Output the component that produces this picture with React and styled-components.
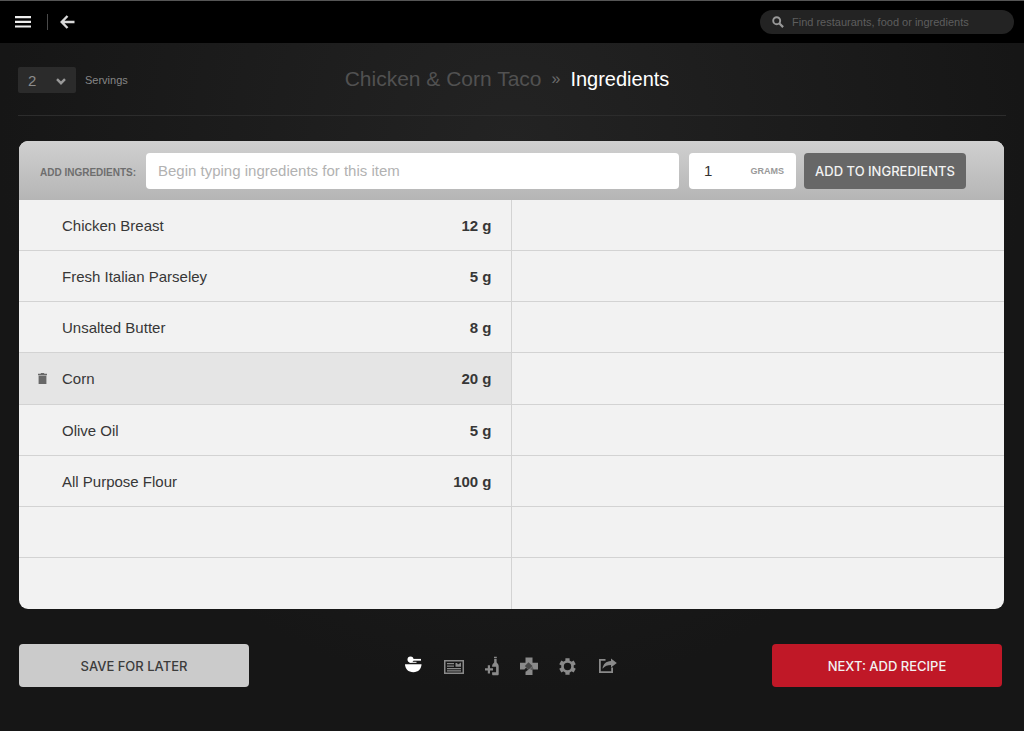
import styled, { createGlobalStyle } from "styled-components";

const GlobalStyle = createGlobalStyle`
  * {
    box-sizing: border-box;
  }

  body {
    margin: 0;
    background: #161616;
    font-family: "Liberation Sans", Arial, sans-serif;
  }

  input,
  select,
  button {
    margin: 0;
    border: 0;
    font-family: inherit;
  }
`;

const Page = styled.div`
  min-height: 100vh;
  background: radial-gradient(ellipse 50% 75% at 50% 20%, #232323, #161616);
`;

const TopBar = styled.header`
  display: flex;
  align-items: center;
  height: 43px;
  padding: 0 10px 0 15px;
  background: #000;
  border-top: 1px solid #555;
`;

const IconButton = styled.button`
  display: flex;
  padding: 0;
  background: none;
  color: ${({ $color }) => $color || "#8a8a8a"};
  cursor: pointer;
`;

const Divider = styled.span`
  width: 1px;
  height: 16px;
  margin: 0 12px 0 16px;
  background: #4a4a4a;
`;

const Search = styled.label`
  display: flex;
  align-items: center;
  gap: 8px;
  width: 254px;
  height: 24px;
  margin-left: auto;
  padding: 0 12px;
  border-radius: 12px;
  background: #232323;
  color: #999;
`;

const SearchInput = styled.input`
  flex: 1;
  min-width: 0;
  padding: 0;
  background: none;
  color: #aaa;
  font-size: 11px;
  outline: none;

  &::placeholder {
    color: #5e5e5e;
    opacity: 1;
  }
`;

const Heading = styled.div`
  display: grid;
  grid-template-columns: 110px 1fr 120px;
  align-items: center;
  height: 73px;
  margin: 0 18px;
  border-bottom: 1px solid #2c2c2c;
`;

const Servings = styled.label`
  display: flex;
  align-items: center;
  gap: 9px;
  padding-top: 2px;
  color: #868686;
  font-size: 11px;
`;

const SelectBox = styled.span`
  position: relative;
  color: #999;

  svg {
    position: absolute;
    top: 11px;
    right: 10px;
    pointer-events: none;
  }
`;

const Select = styled.select`
  display: block;
  width: 58px;
  height: 26px;
  padding: 0 10px;
  border-radius: 2px;
  background: #2b2b2b;
  color: #8c8c8c;
  font-size: 15px;
  appearance: none;
`;

const Title = styled.h1`
  display: flex;
  align-items: center;
  justify-content: center;
  gap: 10px;
  margin: 0;
  color: #fff;
  font-size: 20px;
  font-weight: 400;
  line-height: 24px;
  white-space: nowrap;
`;

const Dish = styled.a`
  color: #515151;
  font-size: 21px;
  text-decoration: none;
`;

const Crumb = styled.span`
  color: #6c6c6c;
  font-size: 16px;
`;

const Panel = styled.main`
  margin: 25px 20px 0 19px;
  border-radius: 9px;
  background: #f2f2f2;
  overflow: hidden;
`;

const AddForm = styled.form`
  display: flex;
  align-items: center;
  gap: 8px;
  height: 59px;
  padding: 0 38px 0 21px;
  background: linear-gradient(#d0d0d0, #b5b5b5);
`;

const AddLabel = styled.label`
  min-width: 98px;
  color: #6e6e6e;
  font-size: 10px;
  font-weight: 700;
  line-height: 12px;
  padding-top: 4px;
  white-space: nowrap;
`;

const NameInput = styled.input`
  flex: 1;
  min-width: 0;
  height: 36px;
  padding: 0 12px;
  border-radius: 4px;
  background: #fff;
  color: #333;
  font-size: 15px;

  &::placeholder {
    color: #b2b2b2;
    opacity: 1;
  }
`;

const Amount = styled.label`
  display: flex;
  align-items: center;
  width: 107px;
  height: 36px;
  margin-left: 2px;
  padding: 0 12px 0 15px;
  border-radius: 4px;
  background: #fff;
  color: #999;
  font-size: 9px;
  font-weight: 700;
`;

const AmountInput = styled.input`
  flex: 1;
  min-width: 0;
  padding: 0;
  color: #333;
  font-size: 15px;
`;

const Button = styled.button`
  flex: none;
  width: ${({ $wide }) => ($wide ? "230px" : "162px")};
  height: ${({ $wide }) => ($wide ? "43px" : "36px")};
  padding: 0;
  border-radius: 4px;
  background: ${({ $bg }) => $bg};
  color: ${({ $color }) => $color || "#f2f2f2"};
  font-family: Inter, sans-serif;
  font-size: 13px;
  font-weight: 500;
  cursor: pointer;
`;

const Table = styled.table`
  width: 100%;
  table-layout: fixed;
  border-collapse: separate;
  border-spacing: 0;
  color: #373737;
  font-size: 15px;
`;

const Cell = styled.td`
  height: ${({ $active }) => ($active ? "52px" : "51px")};
  padding: 0;
  border-bottom: 1px solid #d3d3d3;
  background: ${({ $active }) => ($active ? "#e5e5e5" : "none")};

  tr:last-child & {
    border-bottom: 0;
  }
`;

const NameCell = styled(Cell)`
  width: 35%;
`;

const AmountCell = styled(Cell)`
  width: 15%;
  padding-right: 19px;
  border-right: 1px solid #d3d3d3;
  font-weight: 700;
  text-align: right;
`;

const Item = styled.div`
  display: grid;
  grid-template-columns: 24px 1fr;
  align-items: center;
  padding-left: 19px;
`;

const Footer = styled.footer`
  display: flex;
  align-items: center;
  justify-content: space-between;
  padding: 35px 22px 44px 19px;
`;

const Steps = styled.nav`
  display: flex;
  align-items: center;
  gap: 21px;
`;

function MenuIcon() {
  return (
    <svg width="16" height="12" viewBox="0 0 16 12" fill="currentColor">
      <path d="M0 0h16v2.200H0zM0 4.700h16v2.200H0zM0 9.400h16v2.200H0z" />
    </svg>
  );
}

function BackIcon() {
  return (
    <svg width="15" height="14" viewBox="0 0 15 14" fill="none" stroke="currentColor" strokeWidth="2.4">
      <path d="M7.5 1 1.700 7l5.800 6M2 7h12.500" />
    </svg>
  );
}

function SearchIcon() {
  return (
    <svg width="12" height="12" viewBox="0 0 12 12" fill="none" stroke="currentColor">
      <circle cx="4.7" cy="4.7" r="3.5" strokeWidth="1.9" />
      <path d="m7.2 7.2 3.9 3.9" strokeWidth="2.2" />
    </svg>
  );
}

function ChevronIcon() {
  return (
    <svg width="10" height="7" viewBox="0 0 10 7" fill="none" stroke="currentColor" strokeWidth="2.4">
      <path d="m1 1.2 4 4 4-4" />
    </svg>
  );
}

function TrashIcon() {
  return (
    <svg width="9" height="11" viewBox="0 0 9 11" fill="currentColor">
      <path d="M0 .8h2.8V0h3.4v.8H9v1.400H0zM.6 2.800h7.800V11H.6z" />
    </svg>
  );
}

function BowlIcon() {
  return (
    <svg width="18" height="20" viewBox="0 0 18 20" fill="currentColor">
      <path d="M0 8.200h16.500c0 4.400-3.200 8-8.200 8S0 12.600 0 8.200z" />
      <circle cx="5.500" cy="3.400" r="3" />
      <path d="M7 2.900h9v1.800H7z" />
      <path d="M4.500 5.800h7v1h-7z" />
    </svg>
  );
}

function CardIcon() {
  return (
    <svg width="20" height="20" viewBox="0 0 20 20" fill="currentColor">
      <path fillRule="evenodd" d="M0 4h20v14H0zM1.500 5.500v11h17v-11z" />
      <path d="M3 7h7v1.200H3zM3 9.500h7v1.200H3zM3 12h14v1.200H3zM3 14.300h14v1.200H3z" />
      <path d="M11.500 7h1.500l1 1.400L17 6.500v4.200h-5.500z" />
    </svg>
  );
}

function BottleIcon() {
  return (
    <svg width="14" height="20" viewBox="0 0 14 20" fill="currentColor">
      <path d="M9 .8h2.800v1.300H9zM9.200 2.800h2.400v3.500c.3 1.300 2.100 1.700 2.100 3.600v8c0 .9-.4 1.400-1.200 1.400H8.300c-.8 0-1.200-.5-1.200-1.400v-1.700h4v-5.400h-4V9.900c0-1.900 1.800-2.300 2.100-3.600z" />
      <path d="M2.800 9.300H5v3h3v2.200H5v3H2.800v-3H0v-2.200h2.800z" />
    </svg>
  );
}

function CrossIcon() {
  return (
    <svg width="18" height="20" viewBox="0 0 18 20" fill="currentColor">
      <path d="M5.500 1.500h7v5.300H18v6.800h-5.500V19h-7v-5.400H0V6.800h5.500z" />
      <path d="m4.800 10 3.700-3.700 4 3.700-4 3.700z" fill="#474747" />
      <path d="m4.500 13.300 1.600-1.600 2 2-2.600 2.400z" fill="#1c1c1c" />
      <path d="m10 13 2.400-2.400 1.300 3-2.400.3z" fill="#1c1c1c" opacity=".4" />
    </svg>
  );
}

function GearIcon() {
  return (
    <svg width="17" height="20" viewBox="0 0 17 20" fill="none" stroke="currentColor">
      <circle cx="8.500" cy="10.500" r="5" strokeWidth="2.600" />
      <path
        d="M8.500 2.200v3M8.500 15.800v3M1.300 6.400l2.600 1.500M13.100 13.100l2.600 1.500M1.300 14.600l2.600-1.500M13.100 7.900l2.600-1.500"
        strokeWidth="4.200"
      />
    </svg>
  );
}

function ShareIcon() {
  return (
    <svg width="20" height="20" viewBox="0 0 20 20" fill="currentColor">
      <path d="M2 3h6.500v1.800H3.800v10.400h10.400v-3.700H16V17H2z" />
      <path d="M14 2.500 19.800 7 14 11.500V9c-3.500 0-6 .8-8.500 3.700C6 8.200 9 5.200 14 5z" />
    </svg>
  );
}

const ingredients = [
  { name: "Chicken Breast", amount: "12 g" },
  { name: "Fresh Italian Parseley", amount: "5 g" },
  { name: "Unsalted Butter", amount: "8 g" },
  { name: "Corn", amount: "20 g", active: true },
  { name: "Olive Oil", amount: "5 g" },
  { name: "All Purpose Flour", amount: "100 g" },
  {},
  {},
];

const steps = [
  { label: "Ingredients", Icon: BowlIcon, color: "#fff" },
  { label: "Recipe", Icon: CardIcon },
  { label: "Pairings", Icon: BottleIcon },
  { label: "Health", Icon: CrossIcon },
  { label: "Settings", Icon: GearIcon },
  { label: "Share", Icon: ShareIcon },
];

function App() {
  return (
    <Page>
      <GlobalStyle />
      <TopBar>
        <IconButton $color="#eee" aria-label="Menu">
          <MenuIcon />
        </IconButton>
        <Divider />
        <IconButton $color="#d8d8d8" aria-label="Back">
          <BackIcon />
        </IconButton>
        <Search>
          <SearchIcon />
          <SearchInput
            aria-label="Search"
            placeholder="Find restaurants, food or ingredients"
          />
        </Search>
      </TopBar>

      <Heading>
        <Servings>
          <SelectBox>
            <Select defaultValue="2">
              <option>1</option>
              <option>2</option>
              <option>3</option>
              <option>4</option>
            </Select>
            <ChevronIcon />
          </SelectBox>
          Servings
        </Servings>
        <Title>
          <Dish href="#dish">Chicken &amp; Corn Taco</Dish>
          <Crumb>»</Crumb>
          Ingredients
        </Title>
      </Heading>

      <Panel>
        <AddForm onSubmit={(e) => e.preventDefault()}>
          <AddLabel htmlFor="ingredient">ADD INGREDIENTS:</AddLabel>
          <NameInput
            id="ingredient"
            placeholder="Begin typing ingredients for this item"
          />
          <Amount>
            <AmountInput defaultValue="1" />
            GRAMS
          </Amount>
          <Button $bg="#676767">ADD TO INGREDIENTS</Button>
        </AddForm>
        <Table>
          <tbody>
            {ingredients.map(({ name, amount, active }, i) => (
              <tr key={i}>
                <NameCell $active={active}>
                  <Item>
                    <span>
                      {active && (
                        <IconButton $color="#686868" aria-label="Remove">
                          <TrashIcon />
                        </IconButton>
                      )}
                    </span>
                    {name}
                  </Item>
                </NameCell>
                <AmountCell $active={active}>{amount}</AmountCell>
                <Cell />
              </tr>
            ))}
          </tbody>
        </Table>
      </Panel>

      <Footer>
        <Button $wide $bg="#cbcbcb" $color="#3c3c3c">
          SAVE FOR LATER
        </Button>
        <Steps>
          {steps.map(({ label, Icon, color }) => (
            <IconButton key={label} $color={color} aria-label={label}>
              <Icon />
            </IconButton>
          ))}
        </Steps>
        <Button $wide $bg="#c01827">
          NEXT: ADD RECIPE
        </Button>
      </Footer>
    </Page>
  );
}

export default App;
